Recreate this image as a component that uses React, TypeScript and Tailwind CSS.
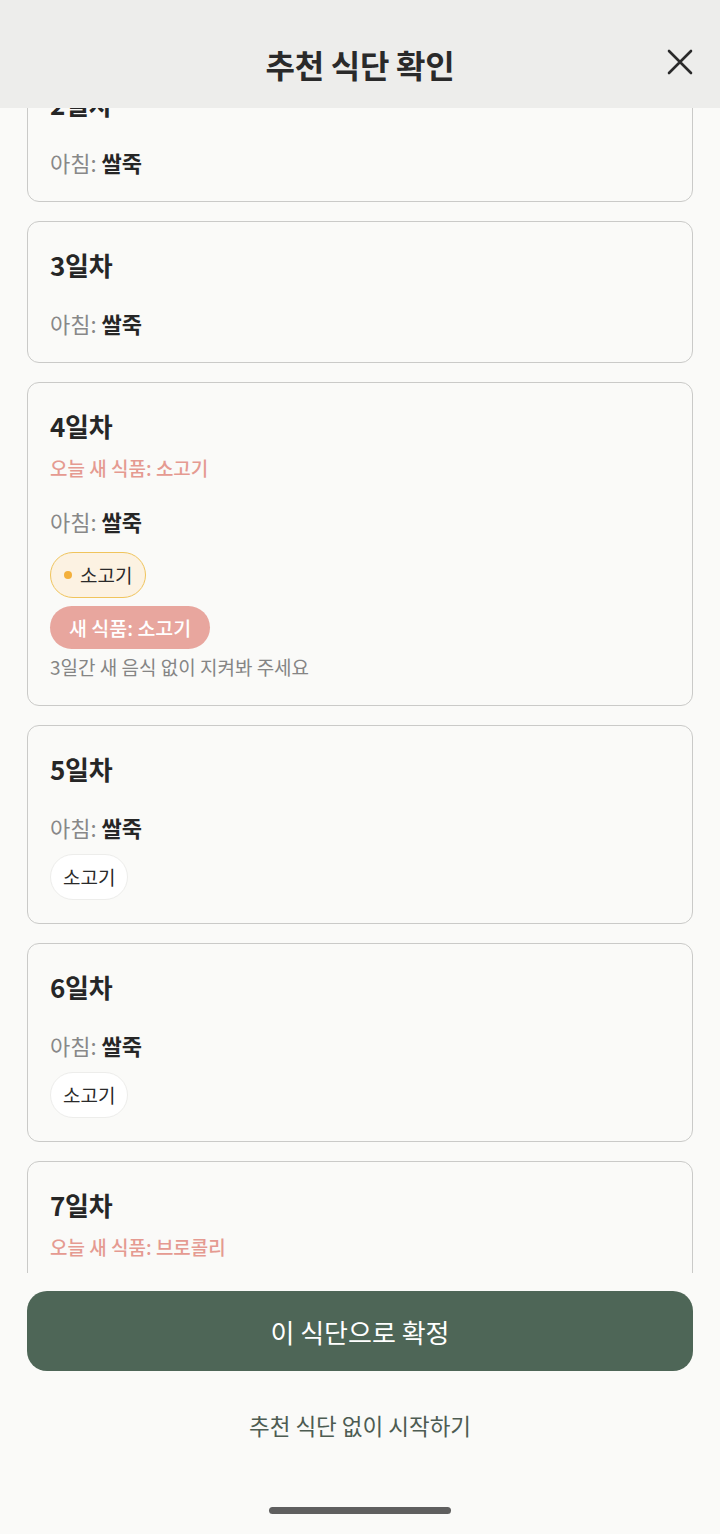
import React from "react";

type Day = {
  day: number;
  newFood?: string;
  chips?: "new" | "plain";
  note?: boolean;
};

const days: Day[] = [
  { day: 2 },
  { day: 3 },
  { day: 4, newFood: "소고기", chips: "new", note: true },
  { day: 5, chips: "plain" },
  { day: 6, chips: "plain" },
  { day: 7, newFood: "브로콜리" },
];

function Card({ d }: { d: Day }) {
  return (
    <div className="rounded-[12px] border-[1.5px] border-[#cacac8] bg-[#fafaf8] px-[22px] pt-[21px] pb-[23px]">
      <div className="text-[26px] font-bold leading-[44px] text-[#262626] tracking-[-0.3px]">{d.day}일차</div>
      {d.newFood && (
        <div className="mt-[7px] text-[19px] leading-[26px] text-[#e59a91] font-medium">
          오늘 새 식품: {d.newFood}
        </div>
      )}
      <div className={`${d.newFood ? "mt-[24px]" : "mt-[20px]"} text-[22px] leading-[32px] text-[#888888]`}>
        아침: <span className="font-bold text-[#262626]">쌀죽</span>
      </div>
      {d.chips === "new" && (
        <div className="mt-[15px] flex flex-col items-start gap-[8px]">
          <div className="flex h-[46px] items-center gap-[8px] rounded-full border-[1.5px] border-[#f0c45c] bg-[#fcf2e2] pl-[13px] pr-[13px]">
            <span className="h-[8px] w-[8px] rounded-full bg-[#f3b03c]" />
            <span className="text-[19px] text-[#2a2a2a]">소고기</span>
          </div>
          <div className="flex h-[43px] items-center rounded-full bg-[#e8a69e] px-[19px] text-[19.5px] font-medium text-white">
            새 식품: 소고기
          </div>
        </div>
      )}
      {d.note && (
        <div className="mt-[5px] mb-[2px] text-[19px] leading-[26px] text-[#858585]">3일간 새 음식 없이 지켜봐 주세요</div>
      )}
      {d.chips === "plain" && (
        <div className="mt-[11px] flex">
          <div className="flex h-[46px] items-center rounded-full border-[1.5px] border-[#ededeb] bg-white px-[12px] text-[19px] text-[#2a2a2a]">
            소고기
          </div>
        </div>
      )}
    </div>
  );
}

export default function App() {
  return (
    <div
      className="relative flex h-[1534px] w-[720px] flex-col overflow-hidden bg-[#fafaf8]"
      style={{ fontFamily: '"Noto Sans CJK KR", "Noto Sans", sans-serif' }}
    >
      <div className="absolute left-0 right-0 top-0 z-10 flex h-[108px] items-center justify-center bg-[#ededeb] pt-[20px]">
        <div className="text-[32px] font-bold text-[#2a2a2a] tracking-[-0.3px]">추천 식단 확인</div>
        <svg
          className="absolute left-[664px] top-[46px]"
          width="32"
          height="32"
          viewBox="0 0 32 32"
          fill="none"
          stroke="#2a2a2a"
          strokeWidth="2.6"
          strokeLinecap="round"
        >
          <path d="M5 5 L27 27 M27 5 L5 27" />
        </svg>
      </div>
      <div className="h-[1273px] overflow-hidden">
        <div className="mt-[60px] flex flex-col gap-[19px] px-[27px]">
          {days.map((d) => (
            <Card key={d.day} d={d} />
          ))}
        </div>
      </div>
      <div className="flex flex-1 flex-col items-center px-[27px] pt-[18px]">
        <button className="flex h-[80px] w-full items-center justify-center rounded-[20px] bg-[#4e6657] text-[26px] text-white">
          이 식단으로 확정
        </button>
        <div className="mt-[38px] text-[22.5px] text-[#4d5c52]">추천 식단 없이 시작하기</div>
        <div className="mt-[64px] h-[7px] w-[182px] rounded-full bg-[#5f5f5f]" />
      </div>
    </div>
  );
}
